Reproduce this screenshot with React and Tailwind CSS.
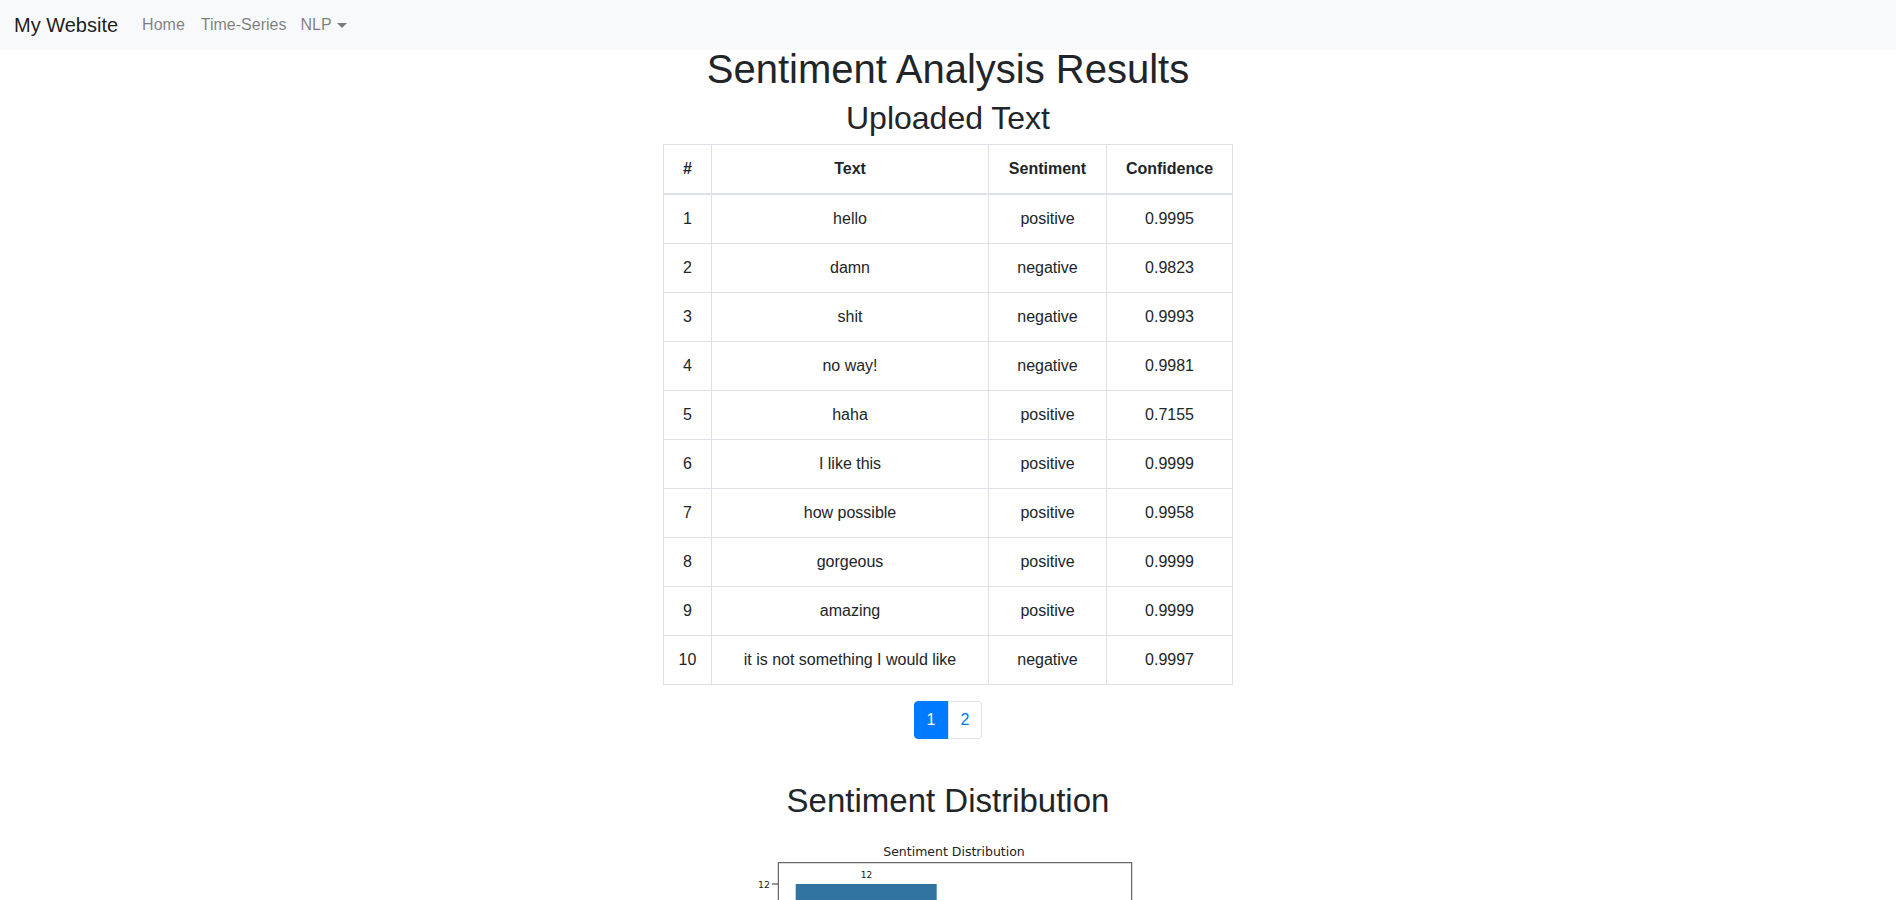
import React from "react";

const rows = [
  ["1", "hello", "positive", "0.9995"],
  ["2", "damn", "negative", "0.9823"],
  ["3", "shit", "negative", "0.9993"],
  ["4", "no way!", "negative", "0.9981"],
  ["5", "haha", "positive", "0.7155"],
  ["6", "I like this", "positive", "0.9999"],
  ["7", "how possible", "positive", "0.9958"],
  ["8", "gorgeous", "positive", "0.9999"],
  ["9", "amazing", "positive", "0.9999"],
  ["10", "it is not something I would like", "negative", "0.9997"],
];

function Navbar() {
  return (
    <nav className="flex h-[50px] items-center bg-[#f8f9fa] pl-[14px] pr-4">
      <a href="#" className="mr-4 text-[20px] leading-[30px] text-black/90">
        My Website
      </a>
      <ul className="flex items-center text-[16px] leading-6 text-black/50">
        <li className="px-2">Home</li>
        <li className="px-2">Time-Series</li>
        <li className="flex items-center pl-[6px] pr-2">
          NLP
          <span className="ml-[5px] inline-block h-0 w-0 border-x-[5px] border-t-[5px] border-x-transparent border-t-current" />
        </li>
      </ul>
    </nav>
  );
}

function ResultsTable() {
  return (
    <table className="w-[569px] table-fixed border-collapse text-center text-[16px] leading-6 text-[#212529]">
      <colgroup>
        <col className="w-[48px]" />
        <col className="w-[277px]" />
        <col className="w-[118px]" />
        <col className="w-[126px]" />
      </colgroup>
      <thead>
        <tr>
          {["#", "Text", "Sentiment", "Confidence"].map((h) => (
            <th
              key={h}
              className="border border-b-2 border-[#dee2e6] px-3 py-3 font-bold"
            >
              {h}
            </th>
          ))}
        </tr>
      </thead>
      <tbody>
        {rows.map((r) => (
          <tr key={r[0]}>
            {r.map((c, i) => (
              <td key={i} className="border border-[#dee2e6] px-3 py-3">
                {c}
              </td>
            ))}
          </tr>
        ))}
      </tbody>
    </table>
  );
}

function Pagination() {
  return (
    <ul className="flex text-[16px] leading-5">
      <li className="rounded-l-[4px] border border-[#007bff] bg-[#007bff] px-3 py-2 text-white">
        1
      </li>
      <li className="-ml-px rounded-r-[4px] border border-[#dee2e6] bg-white px-3 py-2 text-[#007bff]">
        2
      </li>
    </ul>
  );
}

function DistributionChart() {
  // seaborn-style bar plot, positive count = 12
  return (
    <svg width="480" height="420" viewBox="0 0 480 420" className="block">
      <text
        x="246"
        y="28"
        textAnchor="middle"
        fontFamily="'DejaVu Sans', sans-serif"
        fontSize="12.5"
        fill="#222"
      >
        Sentiment Distribution
      </text>
      <rect x="87.7" y="56" width="141" height="340" fill="#3274a1" />
      <rect x="263.7" y="198" width="141" height="198" fill="#e1812c" />
      <text
        x="158.5"
        y="50"
        textAnchor="middle"
        fontFamily="'DejaVu Sans', sans-serif"
        fontSize="9"
        fill="#222"
      >
        12
      </text>
      <line x1="64" y1="56" x2="70" y2="56" stroke="#333" strokeWidth="1" />
      <text
        x="62"
        y="60"
        textAnchor="end"
        fontFamily="'DejaVu Sans', sans-serif"
        fontSize="9.4"
        fill="#222"
      >
        12
      </text>
      <rect
        x="70.3"
        y="34.7"
        width="353.4"
        height="361"
        fill="none"
        stroke="#444"
        strokeWidth="1"
      />
    </svg>
  );
}

export default function App() {
  return (
    <div className="min-h-screen bg-white font-['Liberation_Sans',Arial,sans-serif] text-[#212529]">
      <Navbar />
      <main className="flex flex-col items-center">
        <h1 className="mb-[11px] text-[40px] font-medium leading-[38px]">
          Sentiment Analysis Results
        </h1>
        <h2 className="mb-[7px] text-[32px] font-medium leading-[38px]">
          Uploaded Text
        </h2>
        <ResultsTable />
        <div className="mt-4">
          <Pagination />
        </div>
        <section className="mt-[43px] flex flex-col items-center">
          <h2 className="mb-2 text-[33px] font-medium leading-[38px]">
            Sentiment Distribution
          </h2>
          <DistributionChart />
        </section>
      </main>
    </div>
  );
}
